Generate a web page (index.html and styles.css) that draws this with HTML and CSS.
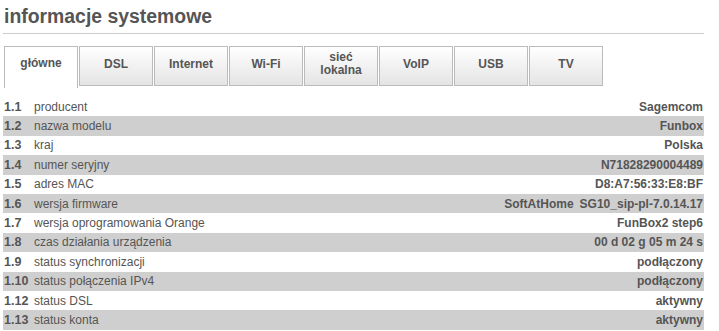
FILE: index.html
```html
<!DOCTYPE html>
<html lang="pl">
<head>
    <meta charset="UTF-8">
    <title>informacje systemowe</title>
    <link rel="stylesheet" href="styles.css">
</head>
<body>
    <div class="page">
        <h1 class="title">informacje systemowe</h1>

        <!-- tabs -->
        <div class="tabs">
            <div class="tab active">główne</div>
            <div class="tab">DSL</div>
            <div class="tab">Internet</div>
            <div class="tab">Wi-Fi</div>
            <div class="tab">sieć<br>lokalna</div>
            <div class="tab">VoIP</div>
            <div class="tab">USB</div>
            <div class="tab">TV</div>
        </div>

        <!-- system info rows -->
        <div class="info">
            <div class="row"><span class="num">1.1</span><span class="label">producent</span><span class="value">Sagemcom</span></div>
            <div class="row"><span class="num">1.2</span><span class="label">nazwa modelu</span><span class="value">Funbox</span></div>
            <div class="row"><span class="num">1.3</span><span class="label">kraj</span><span class="value">Polska</span></div>
            <div class="row"><span class="num">1.4</span><span class="label">numer seryjny</span><span class="value">N71828290004489</span></div>
            <div class="row"><span class="num">1.5</span><span class="label">adres MAC</span><span class="value">D8:A7:56:33:E8:BF</span></div>
            <div class="row"><span class="num">1.6</span><span class="label">wersja firmware</span><span class="value"><span class="vendor">SoftAtHome</span>SG10_sip-pl-7.0.14.17</span></div>
            <div class="row"><span class="num">1.7</span><span class="label">wersja oprogramowania Orange</span><span class="value">FunBox2 step6</span></div>
            <div class="row"><span class="num">1.8</span><span class="label">czas działania urządzenia</span><span class="value">00 d 02 g 05 m 24 s</span></div>
            <div class="row"><span class="num">1.9</span><span class="label">status synchronizacji</span><span class="value">podłączony</span></div>
            <div class="row"><span class="num">1.10</span><span class="label">status połączenia IPv4</span><span class="value">podłączony</span></div>
            <div class="row"><span class="num">1.12</span><span class="label">status DSL</span><span class="value">aktywny</span></div>
            <div class="row"><span class="num">1.13</span><span class="label">status konta</span><span class="value">aktywny</span></div>
        </div>
    </div>
</body>
</html>
```

FILE: styles.css
```css
body {
    margin: 0;
    font-family: "Liberation Sans", Arial, sans-serif;
    color: #555;
    background: #fff;
}
.page {
    width: 701px;
    padding-left: 3px;
}
.title {
    margin: 0;
    padding: 4px 0 0 1px;
    height: 29px;
    font-size: 19.4px;
    line-height: 24px;
    color: #555;
    border-bottom: 1px solid #ccc;
}
/* tabs */
.tabs {
    display: flex;
    gap: 1px;
    margin-top: 12px;
    padding-left: 1px;
    height: 42px;
}
.tab {
    box-sizing: border-box;
    width: 74px;
    height: 40px;
    padding-bottom: 4px;
    border: 1px solid #bbb;
    background: linear-gradient(#fff, #e4e4e4);
    display: flex;
    align-items: center;
    justify-content: center;
    text-align: center;
    font-size: 12px;
    font-weight: bold;
    line-height: 13px;
    color: #555;
}
.tab.active {
    height: 42px;
    padding: 10px 0 0;
    align-items: flex-start;
    background: #fff;
    border-bottom: none;
}
/* info rows */
.info {
    margin-top: 9px;
}
.row {
    display: flex;
    align-items: center;
    height: 19.4px;
    font-size: 12px;
    padding-right: 1px;
}
.row:nth-child(even) {
    background: #cfcfcf;
}
.num {
    width: 30px;
    padding-left: 1px;
    font-weight: bold;
    font-size: 12.5px;
}
.label {
    flex: 1;
}
.value {
    font-weight: bold;
    text-align: right;
}
.vendor {
    margin-right: 6px;
}
```
